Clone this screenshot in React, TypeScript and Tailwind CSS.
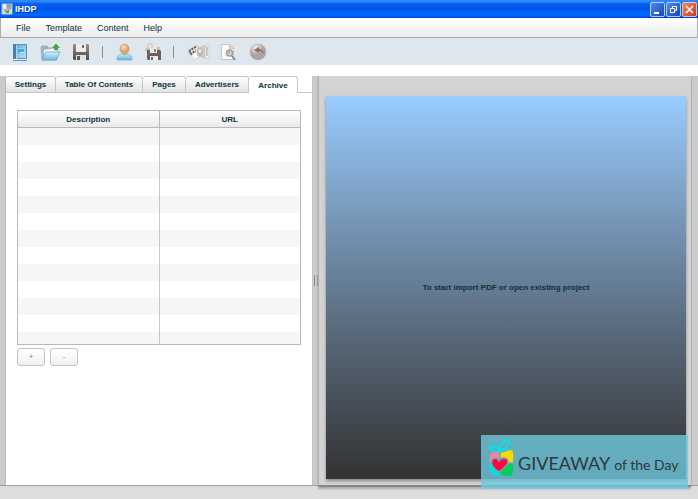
import React from "react";

const rows = Array.from({ length: 13 }, (_, i) => i);
const menus = ["File", "Template", "Content", "Help"];
const tabs = [
  { label: "Settings", width: "w-[50px]" },
  { label: "Table Of Contents", width: "w-[87px]" },
  { label: "Pages", width: "w-[43px]" },
  { label: "Advertisers", width: "w-[63px]" },
];

function AppIcon() {
  return (
    <svg width="12" height="12" viewBox="0 0 12 12" aria-hidden="true">
      <rect x="0.5" y="0.5" width="11" height="11" rx="1" fill="#b9c6cb" />
      <path d="M2 1h3v5H2z" fill="#e8f2f4" />
      <path d="M6 1h4v5H6z" fill="#8ca6b5" />
      <path d="M1 7l3-1 3 1 4-1v5H1z" fill="#d3d4cc" />
      <path d="M3 5l3 3 2-2v4H5z" fill="#72946f" />
    </svg>
  );
}

function BookIcon() {
  return (
    <svg width="16" height="18" viewBox="0 0 16 18" aria-hidden="true">
      <defs>
        <linearGradient id="book" x1="0" y1="0" x2="1" y2="1">
          <stop offset="0" stopColor="#5fa5d8" />
          <stop offset="1" stopColor="#b5e5fa" />
        </linearGradient>
      </defs>
      <path d="M1.5 1.5h13v14h-13z" fill="url(#book)" stroke="#5b8fba" />
      <path d="M1 1h3v15H1z" fill="#4b7dae" />
      <path d="M4.5 2v14" stroke="#a9d6ef" />
      <path d="M6 5h6v5H6z" fill="#47aae3" />
      <path d="M6 5.5h6" stroke="#8fd6f5" />
      <path d="M8 9.5h5" stroke="#f2e7a9" />
      <path d="M2 16.5h12" stroke="#f0f5f8" />
      <path d="M1 17.5h14" stroke="#5c93bb" />
    </svg>
  );
}

function OpenFolderIcon() {
  return (
    <svg width="22" height="18" viewBox="0 0 22 18" aria-hidden="true">
      <defs>
        <linearGradient id="folder" x1="0" y1="0" x2="0" y2="1">
          <stop offset="0" stopColor="#d7f1fb" />
          <stop offset="1" stopColor="#6cb9e0" />
        </linearGradient>
      </defs>
      <path d="M1 4l1-1h5l2 2h8v12H2z" fill="#9fb5bf" stroke="#86a5b4" strokeWidth=".7" />
      <path d="M4 7l13-2v9H4z" fill="#f8fbfb" stroke="#c9d7dc" strokeWidth=".5" />
      <path d="M2 17L6 9h14l-4 8z" fill="url(#folder)" stroke="#62a9cb" strokeWidth=".8" />
      <path d="M14.5 7V4.5h-2L16 1l3.500 3.500h-2V7z" fill="#43a940" stroke="#358b35" strokeWidth=".5" />
    </svg>
  );
}

function SaveIcon() {
  return (
    <svg width="18" height="18" viewBox="0 0 18 18" aria-hidden="true">
      <defs>
        <linearGradient id="save" x1="0" y1="0" x2="0" y2="1">
          <stop offset="0" stopColor="#9a9190" />
          <stop offset="1" stopColor="#51484a" />
        </linearGradient>
      </defs>
      <path d="M1 2l1-1h14l1 1v15H2l-1-1z" fill="url(#save)" />
      <path d="M4 1h10v8H4z" fill="#eeebe8" />
      <path d="M10 2h2v3h-2z" fill="#716868" />
      <path d="M4 12h10v5H4z" fill="#e5e0dc" />
      <path d="M5 13h3v4H5z" fill="#5d5555" />
      <path d="M1 10h16" stroke="#6a6060" />
    </svg>
  );
}

function PersonIcon() {
  return (
    <svg width="17" height="18" viewBox="0 0 17 18" aria-hidden="true">
      <defs>
        <radialGradient id="face" cx="40%" cy="30%">
          <stop offset="0" stopColor="#fbe2b8" />
          <stop offset="1" stopColor="#d8a26c" />
        </radialGradient>
        <linearGradient id="shirt" x1="0" y1="0" x2="0" y2="1">
          <stop offset="0" stopColor="#ccebf7" />
          <stop offset="1" stopColor="#60b2dd" />
        </linearGradient>
      </defs>
      <path d="M1 17c0-4 1-5 5-6h5c4 1 5 2 5 6z" fill="url(#shirt)" stroke="#70b1cf" strokeWidth=".7" />
      <path d="M6 9h5l-2 4z" fill="#d6a372" />
      <ellipse cx="8.500" cy="6" rx="4.500" ry="5" fill="url(#face)" stroke="#c79363" strokeWidth=".7" />
    </svg>
  );
}

function SavePersonIcon() {
  return (
    <svg width="16" height="18" viewBox="0 0 16 18" aria-hidden="true">
      <path d="M0 8c0-3 2-4 4-4s5 1 5 4z" fill="#c8c2be" />
      <circle cx="5" cy="3" r="2.500" fill="#e9e4df" stroke="#b9b1ab" strokeWidth=".5" />
      <path d="M2 7h13l1 1v9H3l-1-1z" fill="#6b6260" />
      <path d="M5 5h7v5H5z" fill="#eeeae7" />
      <path d="M9 6h2v3H9z" fill="#918884" />
      <path d="M5 13h8v4H5z" fill="#f0ece8" />
      <path d="M6 14h2v3H6z" fill="#756c69" />
      <path d="M12 4h3v3h-3z" fill="#c5bfbb" />
    </svg>
  );
}

function PublishIcon() {
  return (
    <svg width="22" height="18" viewBox="0 0 22 18" aria-hidden="true">
      <path d="M3 10l8-5 3 8-9 4z" fill="#f8f7f5" stroke="#c5c0bc" strokeWidth=".5" />
      <path d="M10 5l8-3v13l-8-2z" fill="#d0cbc8" stroke="#b5aeaa" strokeWidth=".5" />
      <path d="M17 2l4-1v15l-4-1z" fill="#f5f3f0" stroke="#b7b1ad" strokeWidth=".5" />
      <path d="M18 3h2v10h-2z" fill="#ccc6c2" />
      <ellipse cx="12" cy="9" rx="3" ry="4" fill="#bdb6b2" />
      <ellipse cx="12" cy="8" rx="1.500" ry="2" fill="#f0ece9" />
      <path d="M1 8l8-5M2 11l6-3" stroke="#645b59" strokeWidth="2" strokeDasharray="2 1" />
      <path d="M1 8l3 4" stroke="#817875" strokeWidth="2" />
    </svg>
  );
}

function PreviewIcon() {
  return (
    <svg width="17" height="18" viewBox="0 0 17 18" aria-hidden="true">
      <path d="M1.500 1.500h8l4 4v11h-12z" fill="#fafafa" stroke="#c9c6c3" />
      <path d="M9.500 1.500v4h4z" fill="#d6d2cf" stroke="#b5b0ac" strokeWidth=".6" />
      <circle cx="9.500" cy="10" r="3" fill="#dedad7" stroke="#a49c97" strokeWidth="1.500" />
      <circle cx="9" cy="9.500" r="1.200" fill="#aca49f" />
      <path d="M12 13l3 4" stroke="#958b86" strokeWidth="2" />
    </svg>
  );
}

function UndoIcon() {
  return (
    <svg width="18" height="18" viewBox="0 0 18 18" aria-hidden="true">
      <defs>
        <radialGradient id="undo" cx="35%" cy="20%">
          <stop offset="0" stopColor="#eee9e6" />
          <stop offset="1" stopColor="#aca29f" />
        </radialGradient>
      </defs>
      <circle cx="9" cy="9" r="8" fill="url(#undo)" stroke="#b5adaa" strokeWidth=".5" />
      <path d="M5 7l5-3v2c3 0 4 2 5 5-2-2-3-3-5-3v2z" fill="#82736d" />
    </svg>
  );
}

const toolClass = "flex h-[22px] shrink-0 items-center justify-center";

function Toolbar() {
  return (
    <div role="toolbar" aria-label="Project tools" className="flex h-[27px] shrink-0 items-center bg-[#dee6ee] pl-3">
      <button aria-label="New project" className={`${toolClass} w-4`}><BookIcon /></button>
      <button aria-label="Open project" className={`${toolClass} ml-3 w-[22px]`}><OpenFolderIcon /></button>
      <button aria-label="Save project" className={`${toolClass} ml-[10px] w-[18px]`}><SaveIcon /></button>
      <div className="ml-3 h-3 w-px bg-[#8a8f93]" />
      <button aria-label="Template profile" className={`${toolClass} ml-3 w-[18px]`}><PersonIcon /></button>
      <button aria-label="Save template" className={`${toolClass} ml-3 w-4`}><SavePersonIcon /></button>
      <div className="ml-3 h-3 w-px bg-[#8a8f93]" />
      <button aria-label="Publish" className={`${toolClass} ml-[14px] w-[22px]`}><PublishIcon /></button>
      <button aria-label="Preview" className={`${toolClass} ml-[10px] w-[17px]`}><PreviewIcon /></button>
      <button aria-label="Undo" className={`${toolClass} ml-3 w-[18px]`}><UndoIcon /></button>
    </div>
  );
}

function TitleBar() {
  return (
    <header className="flex h-[18px] shrink-0 items-center bg-[linear-gradient(#287ef5_0px,#3290ff_1px,#075ff0_4px,#0055e5_8px,#0067ff_14px,#0065fa_16px,#003cc3_18px)] pl-[1px] pr-[1px]">
      <AppIcon />
      <h1 className="ml-[2px] text-[9px] font-bold leading-4 text-white [text-shadow:1px_1px_#00369d]">IHDP</h1>
      <div className="ml-auto flex gap-px">
        <button aria-label="Minimize" className="h-[15px] w-[15px] rounded-[2px] border border-[#b5cdf7] bg-linear-to-br from-[#5688ef] to-[#1742bd] text-white">
          <svg className="h-full w-full" viewBox="0 0 13 13" aria-hidden="true"><path d="M3 10h5" stroke="currentColor" strokeWidth="2" /></svg>
        </button>
        <button aria-label="Restore" className="h-[15px] w-[15px] rounded-[2px] border border-[#b5cdf7] bg-linear-to-br from-[#5688ef] to-[#1742bd] text-white">
          <svg className="h-full w-full" viewBox="0 0 13 13" fill="none" stroke="currentColor" aria-hidden="true"><path d="M5.500 5V3.500h4v4H8M3.500 5.500h4v4h-4z" /></svg>
        </button>
        <button aria-label="Close" className="h-[15px] w-[15px] rounded-[2px] border border-[#f0beb0] bg-linear-to-br from-[#ef8a68] to-[#c53515] text-white">
          <svg className="h-full w-full" viewBox="0 0 13 13" aria-hidden="true"><path d="M3 3l7 7M10 3l-7 7" stroke="currentColor" strokeWidth="1.500" /></svg>
        </button>
      </div>
    </header>
  );
}

function ArchivePanel() {
  return (
    <section className="flex w-[306px] shrink-0 flex-col bg-white">
      <div role="tablist" className="flex h-[17px] shrink-0 text-[8px] font-bold leading-[15px] text-[#0b333c]">
        {tabs.map((tab) => (
          <button key={tab.label} role="tab" aria-selected="false" className={`${tab.width} h-[17px] shrink-0 whitespace-nowrap rounded-t-[3px] border-r border-b border-t border-[#c3c7c8] bg-linear-to-b from-white to-[#e2e2e2]`}>{tab.label}</button>
        ))}
        <button role="tab" aria-selected="true" className="h-[17px] w-[49px] shrink-0 rounded-t-[3px] border-r border-t border-[#c3c7c8] bg-white">Archive</button>
        <div className="flex-1 border-b border-[#c3c7c8]" />
      </div>
      <div role="tabpanel" aria-label="Archive" className="flex-1 px-[11px] pt-[17px]">
        <table className="w-full table-fixed border-collapse border border-[#b7babc] text-[8px] leading-[15px] text-[#0b333c]">
          <thead>
            <tr className="h-[17px] bg-linear-to-b from-white to-[#e8e8e8]">
              <th scope="col" className="border border-[#b7babc] p-0">Description</th>
              <th scope="col" className="border border-[#b7babc] p-0">URL</th>
            </tr>
          </thead>
          <tbody>
            {rows.map((row) => (
              <tr key={row} className="h-[17px] odd:bg-[#f6f6f6] last:h-[13px]">
                <td className="border-r border-[#c5c8ca] p-0" />
                <td className="p-0" />
              </tr>
            ))}
          </tbody>
        </table>
        <div className="mt-[3px] flex gap-[5px]">
          <button aria-label="Add entry" className="h-[18px] w-7 rounded-[3px] border border-[#c0c3c4] bg-linear-to-b from-white to-[#f0f0f0] text-[8px] leading-4 text-[#7c8688]">+</button>
          <button aria-label="Remove entry" className="h-[18px] w-7 rounded-[3px] border border-[#c0c3c4] bg-linear-to-b from-white to-[#f0f0f0] text-[8px] leading-4 text-[#7c8688]">-</button>
        </div>
      </div>
    </section>
  );
}

function GiftIcon() {
  return (
    <svg className="shrink-0" width="26" height="38" viewBox="0 0 26 38" aria-hidden="true">
      <g fill="none" stroke="#00e5ee" strokeWidth="1.800">
        <path d="M12 12C10 7 15 1 20 1c3 3-1 9-8 11z" />
        <path d="M12 12C8 6 4 7 2 8c0 4 5 6 10 4zM12 12c4-3 7-3 9-1" />
      </g>
      <path d="M2 16q0-2 2-2l7-1v9l-10 3z" fill="#f8819f" />
      <path d="M12 13c2 2 6-2 12-2 2 3 1 8 1 13H12z" fill="#ffd800" />
      <path d="M1 24h10v13c-4-1-8-2-9-5z" fill="#08dce5" />
      <path d="M12 25h13c0 6 1 11-3 12l-10-1z" fill="#00cf5d" />
      <path d="M12 13v24M1 24h24" stroke="#68aabb" strokeWidth="1.500" />
      <path d="M11 33C6 30 2 26 4 21c2-3 6-2 7 1 2-4 8-4 9 0 1 4-5 8-9 11z" fill="#ff063d" stroke="#68aabb" strokeWidth="1.500" />
    </svg>
  );
}

function PreviewPanel() {
  return (
    <main className="relative z-10 mb-[-2px] flex min-w-0 flex-1 flex-col border-l border-b-2 border-l-[#aeb0b1] border-b-[#858687] bg-[#d3d3d3] pt-5 pr-[5px] pb-[6px] pl-[7px] shadow-[0_2px_2px_#aaaaaa]">
      <div className="flex flex-1 items-center justify-center bg-linear-to-b from-[#99ccff] to-[#333333] shadow-[0_2px_3px_#888888]">
        <p className="text-[8px] font-bold leading-3 text-[#0b333c]">To start import PDF or open existing project</p>
      </div>
      <div className="absolute right-[3px] bottom-[-4px] flex h-[54px] w-[207px] items-start bg-[#6fc9df]/80 pt-1 pl-[7px]">
        <GiftIcon />
        <p className="ml-1 flex items-baseline whitespace-nowrap pt-3 font-[Lato,sans-serif] leading-6 text-[#30383c]">
          <span className="text-[18px]">GIVEAWAY</span>
          <span className="ml-1 text-[14px]">of the Day</span>
        </p>
      </div>
    </main>
  );
}

export default function App() {
  return (
    <div className="flex min-h-screen flex-col bg-white font-['Liberation_Sans',sans-serif]">
      <TitleBar />
      <nav aria-label="Main menu" className="flex h-5 shrink-0 items-center gap-[15px] border-b border-l border-r border-[#a9adaf] bg-linear-to-b from-white to-[#ececec] pl-[15px] text-[9px] leading-3 text-[#0b333c]">
        {menus.map((menu) => <button key={menu}>{menu}</button>)}
      </nav>
      <Toolbar />
      <div className="mt-[11px] flex flex-1">
        <div className="w-[6px] shrink-0 border-r border-[#b8babb] bg-[#cbcbcb]" />
        <ArchivePanel />
        <div role="separator" aria-orientation="vertical" className="flex w-[6px] shrink-0 items-center justify-center gap-[2px] border-l border-[#c1c3c4] bg-[#cbcbcb]">
          <div className="h-[11px] w-px bg-[#898c8e]" />
          <div className="h-[11px] w-px bg-[#898c8e]" />
        </div>
        <PreviewPanel />
        <div className="w-[7px] shrink-0 border-l border-[#b5b7b8] bg-[#cbcbcb]" />
      </div>
      <footer className="h-[14px] shrink-0 border-t border-[#9ca0a1] bg-[#dcdddd]" />
    </div>
  );
}
